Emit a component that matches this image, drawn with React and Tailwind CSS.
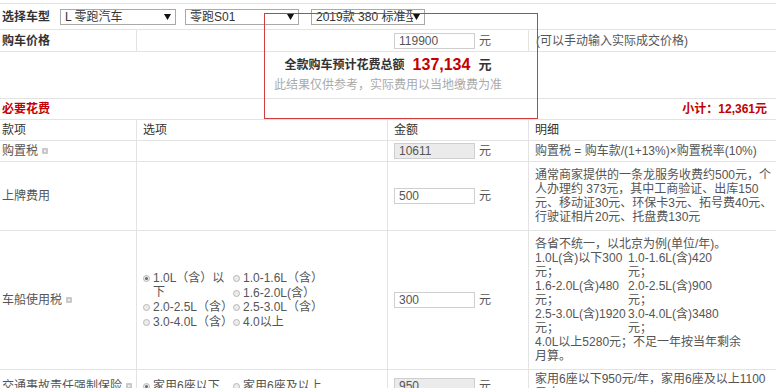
import React from 'react';

const Arrow = () => (
  <svg width="7" height="6" viewBox="0 0 7 6" className="shrink-0">
    <path d="M0 0 L7 0 L3.5 6 Z" fill="#111" />
  </svg>
);

const Select = ({ className, label }) => (
  <div className={`flex h-[16px] items-center justify-between overflow-hidden border border-[#a9a9a9] bg-white pl-[4px] pr-[4px] text-[12px] leading-[14px] text-[#333] ${className}`}>
    <span className="overflow-hidden whitespace-nowrap">{label}</span>
    <Arrow />
  </div>
);

const Field = ({ value, grey }) => (
  <div className="flex items-center">
    <input
      readOnly
      value={value}
      className={`h-[16px] w-[81px] border border-[#cfcfcf] pl-[4px] text-[12px] leading-[14px] text-[#555] outline-none ${grey ? 'bg-[#ebebeb]' : 'bg-white'}`}
    />
    <span className="ml-[4px] text-[12px] text-[#555]">元</span>
  </div>
);

// little grey help marker after a label
const Tip = () => (
  <span className="ml-[4px] inline-flex h-[6px] w-[6px] items-center justify-center rounded-[1px] bg-[#c9c9c9]">
    <span className="h-[2px] w-[2px] bg-[#eee]" />
  </span>
);

const Radio = ({ checked }) => (
  <span className="mr-[3px] mt-[4px] inline-flex h-[7px] w-[7px] shrink-0 items-center justify-center rounded-full border border-[#b8b8b8] bg-[#ececec]">
    {checked && <span className="h-[3px] w-[3px] rounded-full bg-[#666]" />}
  </span>
);

const Option = ({ checked, className = '', children }) => (
  <div className={`flex items-start ${className}`}>
    <Radio checked={checked} />
    <span>{children}</span>
  </div>
);

const Label = ({ children, tip }) => (
  <div className="flex w-[137px] shrink-0 items-center border-r border-[#e3e3e3] pl-[2px] text-[12px] text-[#555]">
    {children}
    {tip && <Tip />}
  </div>
);

const Cell2 = ({ children }) => (
  <div className="flex w-[251px] shrink-0 items-center border-r border-[#e3e3e3] pl-[6px] text-[12px] leading-[14px] text-[#555]">
    {children}
  </div>
);

const Cell3 = ({ children }) => (
  <div className="flex w-[141px] shrink-0 items-center border-r border-[#e3e3e3] pl-[6px]">
    {children}
  </div>
);

const Desc = ({ children }) => (
  <div className="flex flex-1 items-center pl-[6px] text-[12px] leading-[14px] text-[#555]">
    <div>{children}</div>
  </div>
);

export default function App() {
  return (
    <div className="min-h-screen bg-white pt-[3px]" style={{ fontFamily: '"Liberation Sans", "Noto Sans CJK SC", sans-serif' }}>
      <div className="relative w-[776px] border-t border-[#e3e3e3]">
        {/* model chooser */}
        <div className="flex h-[26px] items-center border-b border-[#e3e3e3]">
          <div className="w-[60px] pl-[2px] text-[12px] font-bold text-[#333]">选择车型</div>
          <Select className="w-[116px]" label="L 零跑汽车" />
          <Select className="ml-[9px] w-[114px]" label="零跑S01" />
          <Select className="ml-[12px] w-[114px]" label="2019款 380 标准型" />
        </div>

        {/* price */}
        <div className="flex h-[22px] border-b border-[#e3e3e3]">
          <div className="flex w-[137px] shrink-0 items-center border-r border-[#e3e3e3] pl-[2px] text-[12px] font-bold text-[#333]">购车价格</div>
          <div className="w-[251px] shrink-0" />
          <Cell3>
            <Field value="119900" />
          </Cell3>
          <div className="flex items-center pl-[7px] text-[12px] text-[#555]">(可以手动输入实际成交价格)</div>
        </div>

        {/* total */}
        <div className="flex h-[47px] flex-col items-center justify-center border-b border-[#e3e3e3]">
          <div className="flex h-[20px] items-center">
            <span className="text-[12px] font-bold text-[#333]">全款购车预计花费总额</span>
            <span className="ml-[8px] text-[16px] font-bold text-[#c40000]">137,134</span>
            <span className="ml-[8px] text-[13px] font-bold text-[#333]">元</span>
          </div>
          <div className="h-[20px] text-[12px] leading-[20px] text-[#aaa]">此结果仅供参考，实际费用以当地缴费为准</div>
        </div>

        {/* required costs */}
        <div className="flex h-[21px] items-center justify-between border-b border-[#e3e3e3] pl-[2px] pr-[9px] text-[12px] font-bold text-[#c40000]">
          <span>必要花费</span>
          <span>小计：12,361元</span>
        </div>

        <div className="flex h-[21px] border-b border-[#e3e3e3] text-[12px] text-[#333]">
          <div className="flex w-[137px] shrink-0 items-center border-r border-[#e3e3e3] pl-[2px]">款项</div>
          <div className="flex w-[251px] shrink-0 items-center border-r border-[#e3e3e3] pl-[6px]">选项</div>
          <div className="flex w-[141px] shrink-0 items-center border-r border-[#e3e3e3] pl-[6px]">金额</div>
          <div className="flex items-center pl-[6px]">明细</div>
        </div>

        <div className="flex h-[21px] border-b border-[#e3e3e3]">
          <Label tip>购置税</Label>
          <Cell2 />
          <Cell3>
            <Field value="10611" grey />
          </Cell3>
          <Desc>购置税 = 购车款/(1+13%)×购置税率(10%)</Desc>
        </div>

        <div className="flex h-[69px] border-b border-[#e3e3e3]">
          <Label>上牌费用</Label>
          <Cell2 />
          <Cell3>
            <Field value="500" />
          </Cell3>
          <Desc>
            通常商家提供的一条龙服务收费约500元，个<br />
            人办理约 373元，其中工商验证、出库150<br />
            元、移动证30元、环保卡3元、拓号费40元、<br />
            行驶证相片20元、托盘费130元
          </Desc>
        </div>

        <div className="flex h-[139px] border-b border-[#e3e3e3]">
          <Label tip>车船使用税</Label>
          <Cell2>
            <div className="grid auto-rows-[14.5px] grid-cols-[90px_1fr]">
              <Option checked className="row-span-2">1.0L（含）以下</Option>
              <Option>1.0-1.6L（含）</Option>
              <Option>1.6-2.0L(含）</Option>
              <Option>2.0-2.5L（含）</Option>
              <Option>2.5-3.0L（含）</Option>
              <Option>3.0-4.0L（含）</Option>
              <Option>4.0以上</Option>
            </div>
          </Cell2>
          <Cell3>
            <Field value="300" />
          </Cell3>
          <Desc>
            各省不统一，以北京为例(单位/年)。
            <div className="grid w-[188px] grid-cols-[93px_95px]">
              <span>1.0L(含)以下300<br />元；</span>
              <span>1.0-1.6L(含)420<br />元；</span>
              <span>1.6-2.0L(含)480<br />元；</span>
              <span>2.0-2.5L(含)900<br />元；</span>
              <span>2.5-3.0L(含)1920<br />元；</span>
              <span>3.0-4.0L(含)3480<br />元；</span>
            </div>
            4.0L以上5280元；不足一年按当年剩余<br />
            月算。
          </Desc>
        </div>

        <div className="flex h-[32px] border-b border-[#e3e3e3]">
          <Label tip>交通事故责任强制保险</Label>
          <Cell2>
            <div className="grid grid-cols-[90px_1fr]">
              <Option checked>家用6座以下</Option>
              <Option>家用6座及以上</Option>
            </div>
          </Cell2>
          <Cell3>
            <Field value="950" grey />
          </Cell3>
          <Desc>
            家用6座以下950元/年，家用6座及以上1100<br />
            元/年
          </Desc>
        </div>

        {/* highlight frame around the total */}
        <div className="pointer-events-none absolute left-[264px] top-[9px] h-[106px] w-[274px] border border-[#d23c3c]" />
      </div>
    </div>
  );
}
